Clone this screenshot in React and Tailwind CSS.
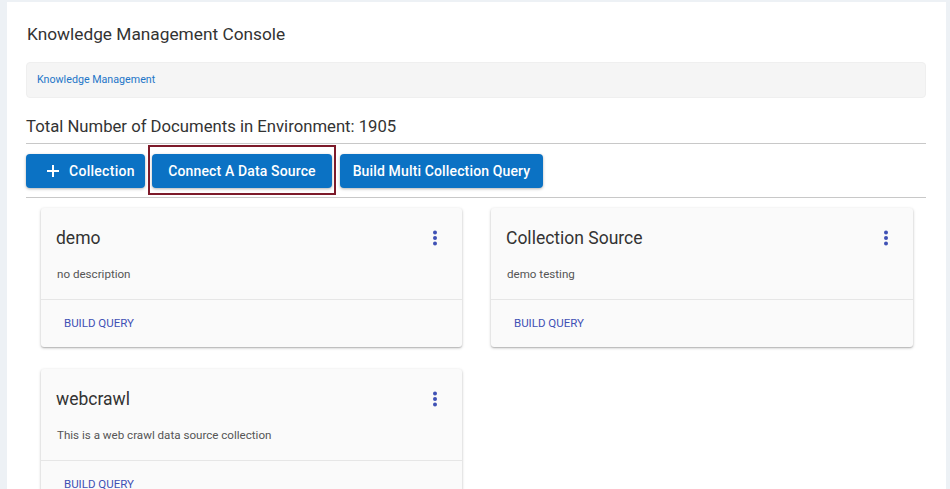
import React from "react";

function Kebab() {
  return (
    <svg width="6" height="16" viewBox="0 0 6 16" className="text-[#3f51b5] -mt-[1px]">
      <circle cx="3" cy="2.5" r="2" fill="currentColor" />
      <circle cx="3" cy="8" r="2" fill="currentColor" />
      <circle cx="3" cy="13.5" r="2" fill="currentColor" />
    </svg>
  );
}

function Card({ title, desc }) {
  return (
    <div className="bg-[#fafafa] rounded-[3px] shadow-[0_1px_3px_rgba(0,0,0,0.25),0_1px_1px_rgba(0,0,0,0.12)]">
      <div className="pl-[15px] pr-[24px] pt-4 pb-4">
        <div className="flex items-center justify-between">
          <div className="text-[17.5px] leading-[28px] text-[#333]">{title}</div>
          <Kebab />
        </div>
        <div className="mt-[13px] pl-[1px] text-[11.6px] leading-[18px] text-[#555]">{desc}</div>
      </div>
      <div className="border-t border-[#e6e6e6] h-[48px] flex items-center pl-[23px]">
        <span className="text-[11.5px] text-[#3f51b5]">BUILD QUERY</span>
      </div>
    </div>
  );
}

export default function App() {
  return (
    <div
      className="min-h-[489px] h-[489px] overflow-hidden bg-[#edf1f5] pl-[7px] pr-[4px] pt-[2px]"
      style={{ fontFamily: "Roboto, 'Liberation Sans', sans-serif" }}
    >
      <div className="bg-white h-full pt-[20px] pl-[19px] pr-[20px]">
        <div className="text-[17.3px] leading-[24px] text-[#333] pl-[1px]">Knowledge Management Console</div>
        <div className="mt-[16px] h-[36px] rounded-[4px] bg-[#f5f5f5] border border-[#efefef] flex items-center pl-[10px]">
          <span className="text-[10.7px] text-[#1f76c8]">Knowledge Management</span>
        </div>
        <div className="mt-[18px] text-[16.7px] leading-[22px] text-[#333]">
          Total Number of Documents in Environment: 1905
        </div>
        <div className="mt-[5px] border-t border-[#c8c8c8]" />
        <div className="mt-[10px] flex items-center">
          <button className="h-[34px] w-[119px] rounded-[4px] bg-[#0b72c4] text-white text-[14px] font-medium tracking-[0.02em] flex items-center justify-start pl-[20px] gap-[9px] shadow-[0_1px_3px_rgba(0,0,0,0.3)]">
            <svg width="14" height="14" viewBox="0 0 14 14">
              <path d="M7 1v12M1 7h12" stroke="white" strokeWidth="2" />
            </svg>
            Collection
          </button>
          <div className="relative ml-[7px]">
            <div className="absolute left-[-4px] right-[-4px] top-[-9px] bottom-[-7px] border-2 border-[#7d1a2a]" />
            <button className="h-[34px] w-[180px] rounded-[4px] bg-[#0b72c4] text-white text-[14px] font-medium tracking-[0.01em] flex items-center justify-center shadow-[0_1px_3px_rgba(0,0,0,0.3)]">
              Connect A Data Source
            </button>
          </div>
          <button className="ml-[8px] h-[34px] w-[203px] rounded-[4px] bg-[#0b72c4] text-white text-[14px] font-medium tracking-[0.01em] flex items-center justify-center shadow-[0_1px_3px_rgba(0,0,0,0.3)]">
            Build Multi Collection Query
          </button>
        </div>
        <div className="mt-[9px] border-t border-[#c8c8c8]" />
        <div className="mt-[10px] pl-[15px] grid grid-cols-[421px_422px] gap-x-[29px] gap-y-[22px]">
          <Card title="demo" desc="no description" />
          <Card title="Collection Source" desc="demo testing" />
          <Card title="webcrawl" desc="This is a web crawl data source collection" />
        </div>
      </div>
    </div>
  );
}
